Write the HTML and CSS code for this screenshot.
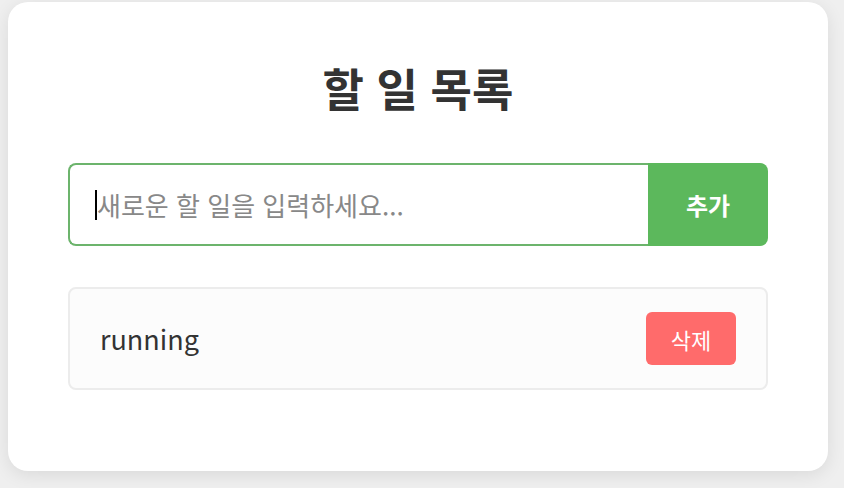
FILE: index.html
```html
<!DOCTYPE html>
<html lang="ko">
<head>
<meta charset="utf-8">
<title>할 일 목록</title>
<link rel="stylesheet" href="styles.css">
</head>
<body>
<div class="card">
  <h1 class="title">할 일 목록</h1>
  <div class="add-row">
    <div class="input-box"><span class="caret"></span><span class="placeholder">새로운 할 일을 입력하세요...</span></div>
    <button class="add-btn">추가</button>
  </div>
  <ul class="todo-list">
    <li class="todo-item">
      <span class="todo-text">running</span>
      <button class="del-btn">삭제</button>
    </li>
  </ul>
</div>
</body>
</html>
```

FILE: styles.css
```css
html, body {
  margin: 0;
  padding: 0;
  background: #efefef;
  font-family: "Noto Sans CJK KR", "Noto Sans", sans-serif;
}
body {
  padding: 2px 16px 17px 8px;
  height: 488px;
  box-sizing: border-box;
  overflow: hidden;
}
.card {
  background: #fff;
  border-radius: 20px;
  box-shadow: 0 4px 18px rgba(0, 0, 0, 0.09);
  padding: 60px 60px 0 60px;
  height: 469px;
  box-sizing: border-box;
}
.title {
  margin: 0;
  text-align: center;
  font-size: 45px;
  line-height: 52px;
  font-weight: 700;
  color: #333;
}
.add-row {
  display: flex;
  margin-top: 49px;
  height: 83px;
}
.input-box {
  flex: 1;
  display: flex;
  align-items: center;
  border: 2px solid #6cb46c;
  border-right: none;
  border-radius: 8px 0 0 8px;
  padding-left: 25px;
}
.caret {
  width: 2px;
  height: 30px;
  background: #000;
  margin-right: 0;
}
.placeholder {
  font-size: 26px;
  color: #888;
}
.add-btn {
  width: 120px;
  border: none;
  background: #5cb85c;
  color: #fff;
  font-family: inherit;
  font-size: 24px;
  font-weight: 700;
  border-radius: 0 8px 8px 0;
}
.todo-list {
  list-style: none;
  margin: 41px 0 0 0;
  padding: 0;
}
.todo-item {
  display: flex;
  align-items: center;
  justify-content: space-between;
  height: 103px;
  box-sizing: border-box;
  border: 2px solid #ececec;
  border-radius: 8px;
  background: #fcfcfc;
  padding: 0 30px 0 30px;
}
.todo-text {
  font-size: 27px;
  color: #333;
}
.del-btn {
  width: 90px;
  height: 53px;
  border: none;
  border-radius: 6px;
  background: #ff6b6b;
  color: #fff;
  font-family: inherit;
  font-size: 22px;
}
```
